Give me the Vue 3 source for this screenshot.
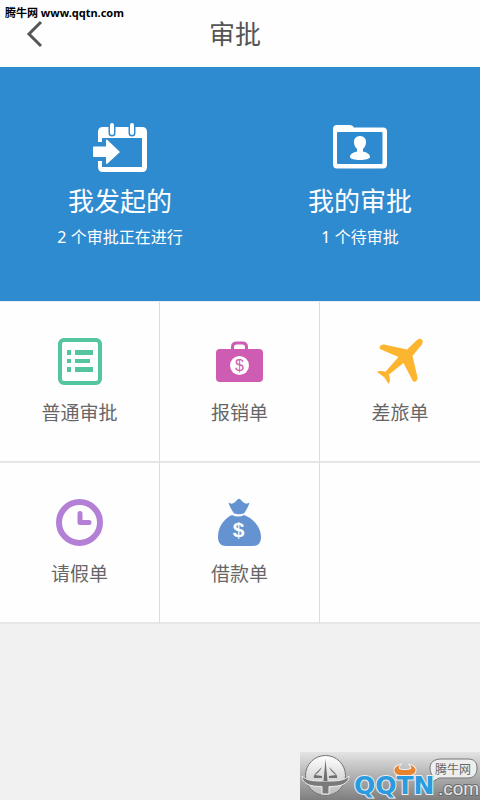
<script setup>
const summaries = [
  { icon: 'calendar', title: '我发起的', note: '2 个审批正在进行' },
  { icon: 'folder', title: '我的审批', note: '1 个待审批' }
]

const forms = [
  { icon: 'list', title: '普通审批' },
  { icon: 'briefcase', title: '报销单' },
  { icon: 'plane', title: '差旅单' },
  { icon: 'clock', title: '请假单' },
  { icon: 'moneybag', title: '借款单' }
]
</script>

<template>
  <div class="page">
    <header class="bar">
      <button class="back" type="button" aria-label="返回">
        <svg width="20" height="28" viewBox="0 0 20 28" aria-hidden="true">
          <path d="M17 2 5 14l12 12" fill="none" stroke="#555" stroke-width="3" />
        </svg>
      </button>
      <h1>审批</h1>
    </header>

    <nav class="hero">
      <a v-for="item in summaries" :key="item.title" class="summary" href="#">
        <svg class="icon" viewBox="0 0 80 70" aria-hidden="true">
          <template v-if="item.icon === 'calendar'">
            <path
              fill="#fff"
              fill-rule="evenodd"
              d="M23 17h39q5 0 5 5v35q0 5-5 5H23q-5 0-5-5V22q0-5 5-5zM22 28v29h40V28z"
            />
            <path fill="#2f8bd0" d="M16 32h8v19h-8z" />
            <path fill="#fff" d="M14 36.500h12V30.500q0-1.500 1.500-.5L40 42 27.500 53.500q-1.500 1-1.500-.5V47H14q-1 0-1-1v-8.500q0-1 1-1z" />
            <g stroke-linecap="round">
              <path stroke="#2f8bd0" stroke-width="7" d="M32 15v8M52 15v8" />
              <path stroke="#fff" stroke-width="4" d="M32 15v8M52 15v8" />
            </g>
          </template>
          <template v-else>
            <path
              fill="#fff"
              fill-rule="evenodd"
              d="M17 15h13q3 0 4 2.500h29q4 0 4 4V54q0 4.500-4 4.500H17q-4 0-4-4.500V19q0-4 4-4zM18 22q-1 0-1 1v29.500q0 1.500 1 1.500h43.500q1 0 1-1.500V23q0-1-1-1z"
            />
            <path
              fill="#fff"
              d="M40 26c4 0 6.500 3 6 7-.3 2.500-1.500 4.500-3 6v2.500c4 1 7 2.500 7 5.500 0 2-5 3-10 3s-10-1-10-3c0-3 3-4.500 7-5.500V39c-1.500-1.500-2.700-3.500-3-6-.5-4 2-7 6-7z"
            />
          </template>
        </svg>
        <strong>{{ item.title }}</strong>
        <span>{{ item.note }}</span>
      </a>
    </nav>

    <main class="grid">
      <a v-for="item in forms" :key="item.title" class="cell" href="#">
        <svg class="icon" viewBox="0 0 80 70" aria-hidden="true">
          <g v-if="item.icon === 'list'">
            <rect x="20" y="15" width="40" height="43" rx="4" fill="none" stroke="#55c5a0" stroke-width="4" />
            <path fill="#55c5a0" d="M27 25h4v5h-4zM35 25h18v5H35zM27 34h4v4h-4zM35 34h15v4H35zM27 42h4v5h-4zM35 42h18v5H35z" />
          </g>
          <g v-else-if="item.icon === 'briefcase'">
            <path d="M32.500 25v-3q0-4 4-4h6q4 0 4 4v3" fill="none" stroke="#cf5cb3" stroke-width="3" />
            <rect x="16" y="24" width="47" height="33" rx="4" fill="#cf5cb3" />
            <circle cx="39.500" cy="40.500" r="9.500" fill="#fff" />
            <text x="39.500" y="46" text-anchor="middle" class="dollar pink">$</text>
          </g>
          <path
            v-else-if="item.icon === 'plane'"
            fill="#fcb52e"
            d="M61 14c2.500 1 2 4 .5 6L52.500 31l5 21.500c.5 3-3 6-5 3L43.500 38 29 49.500c1 3.500 1.500 7-.5 9.500l-4-6.500-7.500-5.500c2-1.500 5.500-1 8.500-.3L38.500 32 21 24.500c-3-1.500-.5-5.500 3-5L47 24.500l10-9.500c1.500-1.200 2.800-1.600 4-1z"
          />
          <g v-else-if="item.icon === 'clock'" fill="none" stroke="#b380d6">
            <circle cx="39.500" cy="36.500" r="20.500" stroke-width="6" />
            <path d="M40 27.500v9h9" stroke-width="5" stroke-linecap="round" stroke-linejoin="round" />
          </g>
          <g v-else fill="#6593d1">
            <path
              d="M28.500 16.500c2 1.500 4 1.500 6 0l3-3c1-1 2-1 3 0l3 3c2 1.500 4 1.500 6 0-1 4-3 7-5.500 11-4 1-6 1-10 0-2.500-4-4.500-7-5.500-11z"
            />
            <path d="M32 29q6.500 3 12 0c8 3 17 11 17 22 0 6-3 9-8 9H26c-5 0-8-3-8-9 0-11 7-19 14-22z" />
            <text x="38.500" y="51" text-anchor="middle" class="dollar white">$</text>
          </g>
        </svg>
        <span>{{ item.title }}</span>
      </a>
      <div class="cell" aria-hidden="true"></div>
    </main>

    <div class="source">腾牛网 www.qqtn.com</div>

    <svg class="brand" width="180" height="48" viewBox="0 0 180 48" role="img" aria-label="腾牛网 QQTN.com">
      <defs>
        <linearGradient id="plate" x1="0" y1="0" x2="0" y2="1">
          <stop offset="0" stop-color="#e4e4e4" />
          <stop offset="1" stop-color="#7e7e7e" />
        </linearGradient>
        <linearGradient id="ball" x1="0" y1="0" x2="0" y2="1">
          <stop offset="0" stop-color="#fff" />
          <stop offset="1" stop-color="#bbb" />
        </linearGradient>
      </defs>
      <rect width="180" height="48" fill="url(#plate)" />
      <circle cx="25.500" cy="23.500" r="20" fill="url(#ball)" stroke="#737373" />
      <path
        d="M2 24c4 4 10 5 18 5h11c8 0 14-1 18-5 0 4-2 6-5 8-4 2-9 2.500-15 2.500V42h-7v-7.500c-6 0-11-.5-15-2.500-3-2-5-4-5-8z"
        fill="#7a7a7a"
        stroke="#eee"
      />
      <path
        d="m25.500 7 2 22h-4zM22 15c-2 4-4 6-7 8l7 1v2h-8c-1-3 2-5 8-11zM29 15c2 4 4 6 7 8l-7 1v2h8c1-3-2-5-8-11z"
        fill="#707070"
      />
      <path
        d="M142 7h26c6 0 9 3 9 9s-3 10-9 10h-29l-7 4 1-6c-2-2-3-5-3-8 0-6 4-9 12-9z"
        fill="#eee"
        stroke="#777"
      />
      <text x="135" y="22" class="bubble">腾牛网</text>
      <text x="138" y="43" class="domain">.com</text>
      <text x="54" y="42" class="name">QQTN</text>
      <path
        d="M100 13c-8 2-7 10 1 10h8c8 0 9-8 1-10 3 4 1 5-5 5s-8-1-5-5z"
        fill="#e8842f"
        stroke="#eee"
        paint-order="stroke"
        stroke-width="2"
      />
    </svg>
  </div>
</template>

<style>
body {
  margin: 0;
  background: #f1f1f1;
}
</style>

<style scoped>
.page {
  position: relative;
  min-height: 100vh;
  background: #f1f1f1;
  font-family: "Noto Sans", "Noto Sans CJK SC", sans-serif;
  color: #666;
}

.bar {
  display: grid;
  grid-template-columns: 70px 1fr 80px;
  align-items: center;
  height: 67px;
  background: #fefefe;
}

.back {
  display: flex;
  padding: 0 0 0 24px;
  border: 0;
  background: none;
}

h1 {
  margin: 0;
  text-align: center;
  font-size: 26px;
  font-weight: 400;
  line-height: 36px;
  color: #555;
}

a {
  color: inherit;
  text-decoration: none;
}

.hero {
  display: grid;
  grid-template-columns: 1fr 1fr;
  background: #2f8bd0;
  color: #fff;
}

.summary,
.cell {
  display: flex;
  flex-direction: column;
  align-items: center;
}

.summary {
  padding: 43px 0 52px;
}

.icon {
  width: 80px;
  height: 70px;
}

.summary strong {
  margin-top: 3px;
  font-size: 26px;
  font-weight: 400;
  line-height: 36px;
}

.summary span {
  margin-top: 6px;
  font-size: 16px;
  line-height: 24px;
}

.grid {
  display: grid;
  grid-template-columns: repeat(3, 1fr);
  grid-auto-rows: 161px;
  border-top: 1px solid #e8eef2;
  background: #fefefe;
}

.cell {
  box-sizing: border-box;
  padding-top: 23px;
  border-right: 1px solid #dcdcdc;
  border-bottom: 2px solid #e6e6e6;
}

.cell:nth-child(3n) {
  border-right: 0;
}

.cell span {
  font-size: 19px;
  line-height: 36px;
}

.dollar {
  font-family: "Liberation Sans", sans-serif;
}

.pink {
  fill: #cf5cb3;
  font-size: 16px;
}

.white {
  fill: #fff;
  font-size: 21px;
  font-weight: 700;
}

.source {
  position: absolute;
  top: 5px;
  left: 5px;
  font-size: 11px;
  font-weight: 700;
  line-height: 16px;
  color: #000;
}

.brand {
  position: absolute;
  right: 0;
  bottom: 0;
}

.bubble {
  fill: #666;
  font-size: 12px;
}

.name {
  fill: #2a9be0;
  stroke: #eee;
  stroke-width: 2px;
  paint-order: stroke;
  font-family: "DejaVu Sans", sans-serif;
  font-size: 25px;
  font-weight: 700;
}

.domain {
  fill: #e4e4e4;
  stroke: #6a6a6a;
  stroke-width: 2px;
  paint-order: stroke;
  font-family: "Liberation Sans", sans-serif;
  font-size: 19px;
}
</style>
